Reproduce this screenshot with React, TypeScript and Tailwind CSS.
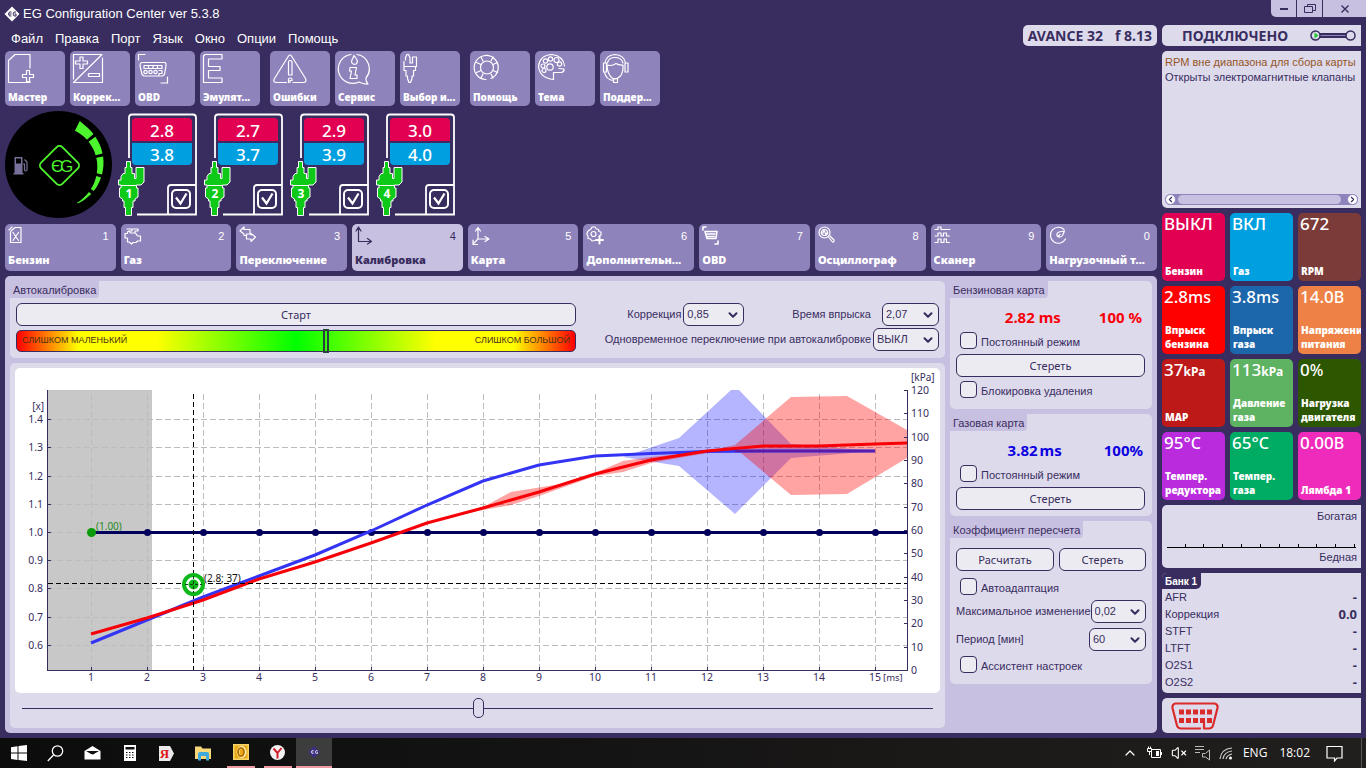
import React from "react";
import { ChevronDown, ChevronLeft, ChevronRight, ChevronUp, Search, VolumeX } from "lucide-react";

const UI = "font-['Liberation_Sans',Arial,sans-serif]";
const HEAVY = "font-['Noto_Sans',sans-serif] font-black";

/* ---------- icons ---------- */

function Ico({ children, small }: { children: React.ReactNode; small?: boolean }) {
  return (
    <svg
      className={small ? "h-5 w-5" : "h-[34px] w-[36px]"}
      viewBox={small ? "0 0 20 20" : "0 0 36 34"}
      fill="none"
      stroke="currentColor"
      strokeWidth={1.2}
      strokeLinejoin="round"
      strokeLinecap="round"
      aria-hidden="true"
    >
      {children}
    </svg>
  );
}

const toolIcons: Record<string, React.ReactNode> = {
  master: <path d="M23 15V1.5H8L1.5 7.5V29.5H23V28M19.5 17.5h3v4h4v3h-4v4h-3v-4h-4v-3h4z" />,
  correct: (
    <path d="M1.5 26V1.5H30L1.5 29.5H30.5V5M8 4h3v4h4.5v3H11v4.5H8V11H3.5V8H8zM17 20.5h10.5v3H17q-1.5-1.5 0-3z" />
  ),
  obd: (
    <g>
      <path d="M1.5 7V1.5H8M30.5 24v6H24" />
      <path d="M4.500 9.5H28q1.5 1 1 3l-1.5 9-2 1.500H7l-2-1.500L3 12.500q0-2.500 1.500-3z" />
      <path d="M7 12.500h18v3H7zM11.500 12.500v3M16 12.500v3M20.500 12.500v3" />
      <circle cx="8.500" cy="19" r="1.700" />
      <circle cx="13.500" cy="19" r="1.700" />
      <circle cx="18.500" cy="19" r="1.700" />
      <path d="M22 17.500h3v3h-3v2" />
    </g>
  ),
  emul: <path d="M3 1.5H20V6H6.5V13.5H18V17.5H6.5V25H20V29.5H1.5V3z" />,
  errors: (
    <path d="M14.5 29.5H4q-3.500-.5-1.500-4L16.500 3q1.500-2 3 0l14 22.500q1.500 3.500-1.500 4H21M16.500 8.500q1.500-2 3.500 0V22h-3.500zM16.500 29.500v-3.500q2-2 3.500 0v1.500h-2v2" />
  ),
  service: (
    <path d="M14 1.5A14.5 14.5 0 1 0 22 29q5 2.500 9 2-2.500-3-2-6A14.500 14.500 0 0 0 20 1.500M17 2.500l2.500 3.500q2 3-.5 5-2.500 1-4-1-1-2 .5-4zM13 14.500h6.500L18 22h2v3.500h-7l1.500-7.500h-2z" />
  ),
  injector: (
    <path d="M3.500 7V4.500L5 1.500h1.500L8 4.500V10h2.500V4h4v9.500H2V8.500M2 13.500v4h2V23h1.500v2.500L7 29.500h1.500l1.500-4V23h1.500v-5.500h2v-4" />
  ),
  help: (
    <g>
      <path d="M14 26.500A12 12 0 1 1 19 25.500" />
      <circle cx="15" cy="14.500" r="6.500" />
      <path d="M9 4l2 4M21 4l-2 4M4.500 9.500l4.500 2M25.500 9.500l-4.500 2M4.500 19.500l4.500-2M25.500 19.500l-4.500-2M9 25l2-4M21 25l-2-4" />
    </g>
  ),
  theme: (
    <g>
      <path d="M27.500 13q-1-10-12.500-11.500Q3 2 1.500 13 2.500 25 16.500 26.500V19.500h8q3-1 2.500-3.500l-5-.5" />
      <circle cx="13" cy="14" r="3.200" />
      <circle cx="6" cy="13" r="2" />
      <circle cx="7" cy="17.500" r="2" />
      <circle cx="8.500" cy="8" r="2.200" />
      <circle cx="13.500" cy="6" r="2.200" />
      <circle cx="19.500" cy="7" r="2.500" />
      <circle cx="22.500" cy="11" r="2.200" />
    </g>
  ),
  support: (
    <path d="M3 10Q4 2 13 1.500 22 2 23.500 10M5.500 10Q6.500 4.500 13 4.500T21 10M3 10H1.500v9H4.500v-9zM23.500 10H26v9h-3v-9M5 12q5 1.500 9-1.500 3 2 7 1.500 .5 7-2.500 11-5 5-9 1.500-4-4-4.500-12M2.500 19q1.500 8 9 8.500M11.500 25.500h4v4h-4z" />
  ),
};

const tabIcons: Record<string, React.ReactNode> = {
  petrol: <path d="M3.500 4.500L7 1.500h6v15H2.500V6zM1 4l3-3M5 6.500l5.500 8M10.500 6.500L5 14.500" />,
  gas: <path d="M3 3h5v2H6M9 3h5v2h-3v2M5 5l1.500 2h5l2 3h3v5h-3l-1.500 1.500H9L7.500 18 5 16H3.500V12H1V7.500h2.500V6z" />,
  swap: <path d="M1 5l4-4v2.500h6V8H7.500v1.500H5V8L1 5zM7.500 9.500V13H12v2.500L16.500 11 12 7.500V9" />,
  calib: <path d="M3.500 15.500H16M3.500 15.500V2M1 5l2.500-4L6 5M12.500 12.500l4 3-4 2.500" />,
  map: <path d="M7 13h11M7 13V2M4.500 5L7 1.500 9.500 5M14 10.500l4 2.500-4 2.500M7 13l-5 5M2 14v4.500h4.500" />,
  extra: (
    <g>
      <path d="M13 10l2-1V6l-2-.5-.5-2-2-.5L9 1H6L5 3 3.500 4 2 5 .8 8l1.200 2v2.500l2.500.5L6 15l3-.5" />
      <circle cx="7.500" cy="8" r="2.500" />
      <path d="M13.500 10.500v7M10 14h7" strokeWidth="2" />
    </g>
  ),
  obd: <path d="M1 4V1h3M16 15v3h-3M3 5.500h12l-1 7H5zM5 8h8M5.500 10.500h7" strokeWidth="1.600" />,
  scope: (
    <g>
      <circle cx="6.500" cy="6.500" r="5.500" />
      <path d="M3 7h2l1-3 2 5 1-2h1M10.500 11l4 5q2 .5 1.500-2l-4-4" />
      <circle cx="6.500" cy="6.500" r="3" />
    </g>
  ),
  scanner: <path d="M1 3.500h3V1h3v2.500h9M1 10h3V7h3v3h2.500V7h3v3h3M1 16.500h3V13h3v3.500h3V13h2.500v3.500h3" />,
  load: <path d="M16.500 13A8 8 0 1 1 15 3.500M8.500 10.500Q6.500 7.500 10 6l5.500-1-2 4.500q-2 2.500-5 1M11 8.500l-2 2" />,
};

function ToolButton({ icon, label, gap }: { icon: string; label: string; gap?: boolean }) {
  return (
    <button
      className={`flex h-[55px] w-[60px] flex-col justify-between rounded-[5px] bg-[#8f83bc] pt-0.5 pb-px pl-0.5 text-left text-white ${gap ? "ml-[5px]" : ""}`}
    >
      <Ico>{toolIcons[icon]}</Ico>
      <span className={`w-full pl-px text-[10px] leading-4 whitespace-nowrap ${HEAVY}`}>{label}</span>
    </button>
  );
}

function Tab({ icon, label, n, active }: { icon: string; label: string; n: string; active?: boolean }) {
  return (
    <button
      className={`flex h-[47px] min-w-0 flex-col justify-between rounded-[5px] px-[3px] pt-0.5 pb-0.5 text-left ${active ? "bg-[#c8c0e0] text-[#382d5e]" : "bg-[#8f83bc] text-white"}`}
    >
      <span className="flex w-full items-center justify-between pr-1">
        <Ico small>{tabIcons[icon]}</Ico>
        <span className={`text-[11px] ${UI}`}>{n}</span>
      </span>
      <span className={`w-full text-[11px] leading-[18px] whitespace-nowrap ${HEAVY}`}>{label}</span>
    </button>
  );
}

/* ---------- gauge and cylinders ---------- */

function ring(a0: number, a1: number) {
  const t = (a: number) => (a + 64) / 128;
  const outer = (a: number) => 48.5 - 5 * Math.sqrt(t(a));
  const inner = (a: number) => 37.5 + 5 * t(a) * t(a);
  const p = (a: number, r: number) => {
    const k = (a * Math.PI) / 180;
    return `${(53.5 + r * Math.cos(k)).toFixed(1)},${(53.5 + r * Math.sin(k)).toFixed(1)}`;
  };
  const steps = [0, 0.25, 0.5, 0.75, 1].map((s) => a0 + (a1 - a0) * s);
  return [...steps.map((a) => p(a, outer(a))), ...steps.reverse().map((a) => p(a, inner(a)))].join(" ");
}

function Gauge() {
  const arcs: [number, number][] = [[-64, -41], [-37, -14], [-10, 13], [17, 37], [42, 64]];
  return (
    <svg className="h-[107px] w-[107px] shrink-0" viewBox="0 0 107 107" role="img" aria-label="EG">
      <circle cx="53.5" cy="53.5" r="53.5" fill="#000" />
      {arcs.map(([a, b]) => (
        <polygon key={a} points={ring(a, b)} fill="#4df52e" />
      ))}
      <rect x="39.5" y="39.5" width="30" height="30" rx="4" transform="rotate(45 54.5 54.5)" fill="none" stroke="#4df52e" strokeWidth="1.8" />
      <text x="46" y="61" fontSize="17" fontFamily="Liberation Sans, sans-serif" fill="#4df52e">Є</text>
      <text x="55" y="61" fontSize="17" fontFamily="Liberation Sans, sans-serif" fill="#4df52e">G</text>
      <path d="M9.500 46h8v16h1v1.500h-10V62h1zM11 47.500v5h5v-5z" fill="#77709a" fillRule="evenodd" />
      <path d="M18 53h1.500v6q1 2 2.500 0v-8l-2.500-2.500" fill="none" stroke="#77709a" strokeWidth="1.200" />
    </svg>
  );
}

function Cylinder({ n, petrol, gas }: { n: number; petrol: string; gas: string }) {
  return (
    <div className="grid h-[103px] w-[81px] font-['Noto_Sans',sans-serif] font-medium text-white">
      <svg className="col-start-1 row-start-1 h-[103px] w-[81px]" viewBox="0 0 81 103" fill="none" stroke="#fff" strokeWidth="1.800">
        <path d="M11 45V4.500q0-3 3-3H75q3 0 3 3V101.500H19M50 101V75q0-3 3-3H78" />
        <path
          d="M8.500 48.500h4v6H14v6h2.500v5h1.500V54.500h8V69l-3 3h-4.500v3H20v9l-3 2v2h-2v6.500h-1.500v8h-6v-8H6V88H4.500v-2l-3-2v-9H3v-3H.5v-5h2.500v-3.500L5 60.500h2v-6h1.500z"
          fill="#0fc918"
          stroke="#fff"
          strokeWidth="1"
        />
        <path d="M3 72.500h16" strokeWidth="1" />
        <text x="11" y="85" textAnchor="middle" fontSize="12" fontWeight="700" fontFamily="Noto Sans, sans-serif" fill="#fff" stroke="none">{n}</text>
      </svg>
      <div className="col-start-1 row-start-1 flex flex-col pt-[5px] pl-3.5">
        <div className="h-[23px] w-[60px] rounded-t-[4px] bg-[#e20052] text-center text-[17px] leading-[26px]">{petrol}</div>
        <div className="mt-0.5 h-[22px] w-[60px] rounded-b-[4px] bg-[#009fe0] text-center text-[17px] leading-6">{gas}</div>
        <label className="mt-6 ml-[39px] grid h-5 w-5">
          <input type="checkbox" defaultChecked aria-label={`Цилиндр ${n}`} className="peer col-start-1 row-start-1 h-5 w-5 appearance-none rounded-[5px] border-2 border-white" />
          <svg className="pointer-events-none col-start-1 row-start-1 hidden h-5 w-5 peer-checked:block" viewBox="0 0 20 20" fill="none" stroke="#fff" strokeWidth="2.200">
            <path d="M5 8.500l4.500 6L15.500 4.500" />
          </svg>
        </label>
      </div>
    </div>
  );
}

/* ---------- form parts ---------- */

function PushButton({ children, className = "" }: { children: React.ReactNode; className?: string }) {
  return (
    <button className={`h-[23px] rounded-[6px] border border-[#382d5e] bg-[#ecebf1] font-['Noto_Sans',sans-serif] text-[11px] leading-5 ${className}`}>
      {children}
    </button>
  );
}

function Drop({ id, value, width }: { id: string; value: string; width: string }) {
  return (
    <span className={`grid items-center ${width}`}>
      <select id={id} defaultValue={value} className="col-start-1 row-start-1 h-[23px] w-full appearance-none rounded-[6px] border border-[#382d5e] bg-[#ecebf1] pl-[3px] text-[11px]">
        <option>{value}</option>
      </select>
      <ChevronDown className="pointer-events-none col-start-1 row-start-1 mr-1 h-3.5 w-3.5 justify-self-end" strokeWidth={3.5} />
    </span>
  );
}

function Check({ children }: { children: React.ReactNode }) {
  return (
    <label className="flex h-[17px] items-center gap-1 pl-1 text-[11px]">
      <input type="checkbox" className="h-[17px] w-[17px] shrink-0 appearance-none rounded-[4px] border border-[#382d5e] bg-[#ecebf1] checked:bg-[#382d5e]" />
      <span className="pt-1">{children}</span>
    </label>
  );
}

function Group({ title, children, className = "" }: { title: string; children: React.ReactNode; className?: string }) {
  return (
    <section className={`overflow-hidden rounded-[5px] bg-[#dddaec] ${className}`}>
      <div className="flex">
        <h2 className="h-[17px] rounded-br-[4px] bg-[#c8c0e0] px-[3px] text-[11px] leading-[18px] font-normal">{title}</h2>
      </div>
      {children}
    </section>
  );
}

/* ---------- chart ---------- */

const redLine = "76,266 132,250 188,232 244,211 300,194 356,175 412,155 468,140 524,124 580,106 636,92 692,83 748,78 804,78 860,76 892,75";
const blueLine = "76,275 132,252 188,229 244,208 300,187 356,163 412,137 468,113 524,97 580,88 636,85.5 692,83.5 748,83 860,83";

function Chart() {
  const xs = Array.from({ length: 15 }, (_, i) => i + 1);
  const left = Array.from({ length: 9 }, (_, i) => 0.6 + i / 10);
  const right = Array.from({ length: 13 }, (_, i) => i * 10);
  const ly = (v: number) => Math.round(164 - (v - 1) * 282) + 0.5;
  const ry = (v: number) => Math.round(302 - v * 2.333) + 0.5;
  return (
    <svg className="block w-full rounded-[5px] bg-white" viewBox="0 0 925 325" fontSize="10.5" fontFamily="Noto Sans, sans-serif" fill="#382d5e">
      <rect x="33" y="22" width="104" height="280" fill="#c8c8c8" />
      <g stroke="#bcbcbc" strokeDasharray="6 3" shapeRendering="crispEdges">
        {xs.map((x) => <line key={x} x1={20.5 + x * 56} x2={20.5 + x * 56} y1="26" y2="302" />)}
        {left.map((v) => <line key={v} x1="33" x2="892" y1={ly(v)} y2={ly(v)} />)}
      </g>
      <polyline points="76,164.500 892,164.500" stroke="#00005c" strokeWidth="3" />
      {xs.slice(1).map((x) => <circle key={x} cx={20.5 + x * 56} cy="164.500" r="3.500" fill="#00005c" />)}
      <polygon points="608,89 664,70 716,22 724,22 776,76 860,83 776,90 720,146 664,98 608,89" fill="#0000ff" fillOpacity=".29" />
      <polygon
        points="440,148 468,139 496,124 552,115 580,105 608,93 636,89 692,83 720,77 776,29 832,28 892,62 892,90 832,126 776,127 720,80 692,85 636,95 608,104 580,108 524,128 496,137 468,142"
        fill="#ff0000"
        fillOpacity=".36"
      />
      <polyline points={blueLine} fill="none" stroke="#3434f4" strokeWidth="3" />
      <polyline points={redLine} fill="none" stroke="#f80008" strokeWidth="3" />
      <polyline points="720,83 860,83" stroke="#5a1ca8" strokeWidth="2.5" />
      <g stroke="#000" strokeDasharray="5 3" shapeRendering="crispEdges">
        <line x1="178.500" x2="178.500" y1="26" y2="302" />
        <line x1="33" x2="892" y1="215.500" y2="215.500" />
      </g>
      <g stroke="#382d5e" shapeRendering="crispEdges">
        <path d="M32.500 22V302.500H892.500V22" fill="none" />
        {xs.map((x) => <line key={x} x1={20.5 + x * 56} x2={20.5 + x * 56} y1="299" y2="302" />)}
        {left.map((v) => <line key={v} x1="33" x2="36" y1={ly(v)} y2={ly(v)} />)}
        {right.map((v) => <line key={v} x1="889" x2="892" y1={ry(v)} y2={ry(v)} />)}
      </g>
      <circle cx="76.500" cy="164.500" r="4.500" fill="#0a9a0a" />
      <text x="81" y="162" fill="#1f8a1f" fontSize="10">(1.00)</text>
      <circle cx="178.500" cy="216.500" r="9.500" fill="#fff" stroke="#0fb81a" strokeWidth="4" />
      <circle cx="178.500" cy="216.500" r="5" fill="#0fb81a" />
      <path d="M178.500 208v17M170 216.500h17" stroke="#173a17" strokeDasharray="3 2" />
      <text x="189" y="214" fill="#111" fontSize="10">(2.8; 37)</text>
      {xs.map((x) => <text key={x} x={20 + x * 56} y="313" textAnchor="middle">{x}</text>)}
      <text x="868" y="313" fontSize="9.5">[ms]</text>
      {left.map((v) => <text key={v} x="28" y={ly(v) + 3} textAnchor="end">{v.toFixed(1)}</text>)}
      <text x="29" y="42" textAnchor="end" fontSize="10">[x]</text>
      {right.map((v) => <text key={v} x="896" y={ry(v) + 3}>{v}</text>)}
      <text x="896" y="13" fontSize="10">[kPa]</text>
    </svg>
  );
}

/* ---------- side tiles ---------- */

const tiles: [string, string, string[], string][] = [
  ["ВЫКЛ", "", ["Бензин"], "bg-[#e20052]"],
  ["ВКЛ", "", ["Газ"], "bg-[#00a0e0]"],
  ["672", "", ["RPM"], "bg-[#7b3b39]"],
  ["2.8", "ms", ["Впрыск", "бензина"], "bg-[#ff0000]"],
  ["3.8", "ms", ["Впрыск", "газа"], "bg-[#1c66ab]"],
  ["14.0", "В", ["Напряжени", "питания"], "bg-[#ee8246]"],
  ["37", "kPa", ["MAP"], "bg-[#bd1919]"],
  ["113", "kPa", ["Давление", "газа"], "bg-[#5db361]"],
  ["0", "%", ["Нагрузка", "двигателя"], "bg-[#2c5700]"],
  ["95°", "C", ["Темпер.", "редуктора"], "bg-[#b92bdc]"],
  ["65°", "C", ["Темпер.", "газа"], "bg-[#00ab63]"],
  ["0.00", "В", ["Лямбда 1"], "bg-[#ef2bbb]"],
];

function Tiles() {
  return (
    <div className="grid grid-cols-3 gap-[5px] font-['Noto_Sans',sans-serif] text-white">
      {tiles.map(([value, unit, lines, color]) => (
        <div key={lines.join(" ")} className={`flex h-[68px] flex-col justify-between overflow-hidden rounded-[5px] pb-[3px] pl-[2px] ${color}`}>
          <div className="text-[17px] leading-[22px] font-medium whitespace-nowrap">
            {value}
            <span className={unit === "kPa" ? "text-[12px] font-bold" : "text-[16px]"}>{unit}</span>
          </div>
          <div className="pl-px text-[10px] leading-[14px] font-black whitespace-nowrap">
            {lines.map((l) => <div key={l}>{l}</div>)}
          </div>
        </div>
      ))}
    </div>
  );
}

/* ---------- taskbar ---------- */

function Taskbar() {
  const item = "flex h-[30px] w-[37px] items-center justify-center";
  return (
    <footer className="flex h-[30px] items-center bg-gradient-to-r from-[#0c0c0c] to-[#211f1e] font-['Open_Sans',sans-serif] text-white">
      <button className={item} aria-label="Пуск">
        <svg className="h-4 w-4" viewBox="0 0 16 16" fill="#fff"><path d="M0 2.200l6.500-1v6.300H0zM7.500 1L16 0v7.500H7.500zM0 8.500h6.500V15L0 14zM7.500 8.500H16V16l-8.500-1z" /></svg>
      </button>
      <button className={item} aria-label="Поиск">
        <svg className="h-[17px] w-[17px]" viewBox="0 0 17 17" fill="none" stroke="#fff" strokeWidth="1.300"><circle cx="10.500" cy="6" r="5.200" /><path d="M6.500 10L.8 16" /></svg>
      </button>
      <button className={item} aria-label="Почта">
        <svg className="h-4 w-[17px]" viewBox="0 0 17 16"><path d="M.5 6L8.500 1l8 5v8.500H.5z" fill="#fff" /><path d="M2 6h13L9 9.500 7 9z" fill="#111" /></svg>
      </button>
      <button className={item} aria-label="Калькулятор">
        <svg className="h-4 w-3" viewBox="0 0 12 16"><path d="M0 0h12v16H0z" fill="#fff" /><path d="M1.500 2h9v2.500h-9z" fill="#111" /><path d="M2 7.500h8M2 10h8M2 12.500h8" stroke="#111" strokeWidth="1.200" strokeDasharray="1.500 1.500" /></svg>
      </button>
      <button className={item} aria-label="Яндекс">
        <svg className="h-[15px] w-[15px]" viewBox="0 0 15 15"><path d="M0 0h11l4 7.500L11 15H0z" fill="#eceaea" /><text x="5.500" y="12" textAnchor="middle" fontSize="13" fontWeight="700" fontFamily="Liberation Serif, serif" fill="#e01515">Я</text></svg>
      </button>
      <button className={item} aria-label="Проводник">
        <svg className="h-[15px] w-[17px]" viewBox="0 0 17 15"><path d="M0 .5h6l1.500 2H16V13H0z" fill="#f6d878" /><path d="M3 14.500V8q0-2 2-2h7q2 0 2 2v6.500h-3V10H6v4.500z" fill="#3fa9dc" /></svg>
      </button>
      <button className={item} aria-label="Органайзер">
        <span className="flex h-full w-7 items-center justify-center border-b-2 border-[#f09aa4]">
          <svg className="h-4 w-4" viewBox="0 0 16 16"><rect width="16" height="16" fill="#f6d46a" /><rect x="1.500" y="1.500" width="13" height="13" fill="#eaa914" /><ellipse cx="8.500" cy="8" rx="3.500" ry="4.500" fill="none" stroke="#fff4c0" strokeWidth="3" /><ellipse cx="8" cy="8" rx="3" ry="4" fill="none" stroke="#b87405" strokeWidth="2" /></svg>
        </span>
      </button>
      <button className={item} aria-label="Браузер">
        <span className="flex h-full w-7 items-center justify-center border-b-2 border-[#f09aa4]">
          <svg className="h-[15px] w-[15px]" viewBox="0 0 15 15"><circle cx="7.500" cy="7.500" r="7.500" fill="#f2f2f2" /><path d="M3.500 3.500L7.500 8v5.500M11.500 3L7.500 8" fill="none" stroke="#d31d2a" strokeWidth="2" /></svg>
        </span>
      </button>
      <button className="flex h-[30px] w-9 items-center justify-center border-b-2 border-[#f09aa4] bg-[#3d3d3d]" aria-label="EG Configuration Center">
        <svg className="h-4 w-4" viewBox="0 0 16 16"><path d="M8 2l6 6-6 6-6-6z" fill="#3c2f86" /><path d="M7.500 6.500H6q-1.500 1.500 0 3h1.500M5.500 8h2M11.500 6.500h-1.500q-1.500 1.500 0 3h1.500V8H10.500" fill="none" stroke="#ddd" strokeWidth=".8" /></svg>
      </button>
      <div className="ml-auto flex h-full items-center gap-2 pr-[4px] text-[12px]">
        <ChevronUp className="h-4 w-4" strokeWidth={1.8} />
        <svg className="h-4 w-[17px]" viewBox="0 0 17 16" fill="none" stroke="#fff"><path d="M5.500 4.500H14.500V12.500H5.500zM15.500 7v3" /><path d="M10 6h3v5h-3z" fill="#fff" stroke="none" /><path d="M1.500 3.500h4v3h-4zM2.500 1.500v2M4.500 1.500v2M3.500 6.500V10" fill="#211f1e" /></svg>
        <VolumeX className="h-4 w-4" strokeWidth={1.6} />
        <svg className="h-4 w-4" viewBox="0 0 16 16" fill="none" stroke="#bbb"><path d="M0 1.500h9M0 4.500h9M0 7.500h5M7.500 8.500h3L14.500 5v10l-4-3h-3z" /></svg>
        <svg className="h-3.5 w-3.5" viewBox="0 0 14 14" fill="none" stroke="#ccc" strokeWidth="1.200"><path d="M1 13Q2 3 13 2M4 13Q5 6 13 5M7 13q1-4 6-5" /><circle cx="11.500" cy="12" r="1.500" fill="#fff" stroke="none" /></svg>
        <span className="pl-0.5">ENG</span>
        <span className="pl-1">18:02</span>
        <button className="pl-2" aria-label="Уведомления">
          <svg className="h-[17px] w-[17px]" viewBox="0 0 17 17" fill="none" stroke="#fff" strokeWidth="1.200"><path d="M1 1.500h15v11.500h-5L8.500 16V13H1z" /></svg>
        </button>
        <span className="ml-2.5 h-full w-px bg-[#555]" />
      </div>
    </footer>
  );
}

/* ---------- page ---------- */

export default function App() {
  const bank = [["AFR", "-"], ["Коррекция", "0.0"], ["STFT", "-"], ["LTFT", "-"], ["O2S1", "-"], ["O2S2", "-"]];
  return (
    <div className={`flex min-h-screen flex-col bg-[#382d5e] text-[#382d5e] ${UI}`}>
      <header className="flex h-[25px] items-start justify-between">
        <div className="flex items-center gap-[3px] pt-1 pl-1 text-[13px] leading-5 text-white">
          <svg className="h-4 w-4" viewBox="0 0 16 16"><path d="M8 .5L15.500 8 8 15.500.5 8z" fill="#fff" /><path d="M7.500 6H5.500q-2 2 0 4h2M4.500 8h3M12 6h-2q-2 2 0 4h2V8h-1.500" fill="none" stroke="#382d5e" /></svg>
          <h1 className="font-normal">EG Configuration Center ver 5.3.8</h1>
        </div>
        <div className="flex h-[17px] gap-px overflow-hidden rounded-bl-[5px]">
          <button className="flex w-[25px] items-center justify-center bg-[#c8c0e0]" aria-label="Свернуть"><span className="h-0.5 w-2 bg-[#382d5e]" /></button>
          <button className="flex w-[25px] items-center justify-center bg-[#c8c0e0]" aria-label="Развернуть">
            <svg className="h-3 w-3.5" viewBox="0 0 14 12" fill="none" stroke="#382d5e"><path d="M1.500 3.500h8v6h-8zM4.500 3V1.500h8v6H10" /></svg>
          </button>
          <button className="flex w-[43px] items-center justify-center bg-[#c8c0e0]" aria-label="Закрыть">
            <svg className="h-2 w-2" viewBox="0 0 8 8" stroke="#382d5e" strokeWidth="1.400"><path d="M.5 .5l7 7M7.500 .5l-7 7" /></svg>
          </button>
        </div>
      </header>

      <div className="flex flex-1 gap-[5px] px-[5px] pb-[5px]">
        <div className="flex min-w-0 flex-1 flex-col gap-[5px]">
          <div className="flex h-[21px] items-center justify-between">
            <nav className="flex gap-3 pt-1.5 pl-1.5 text-[13px] text-white">
              {["Файл", "Правка", "Порт", "Язык", "Окно", "Опции", "Помощь"].map((m) => <button key={m}>{m}</button>)}
            </nav>
            <div className="flex h-[21px] items-center gap-3 rounded-[5px] bg-[#dddaec] px-[5px] font-['Noto_Sans',sans-serif] text-[14px] font-bold">
              <span>AVANCE 32</span><span>f 8.13</span>
            </div>
          </div>

          <div className="flex gap-[5px]">
            <ToolButton icon="master" label="Мастер" />
            <ToolButton icon="correct" label="Коррек..." />
            <ToolButton icon="obd" label="OBD" />
            <ToolButton icon="emul" label="Эмулят..." />
            <ToolButton icon="errors" label="Ошибки" gap />
            <ToolButton icon="service" label="Сервис" />
            <ToolButton icon="injector" label="Выбор и..." />
            <ToolButton icon="help" label="Помощь" gap />
            <ToolButton icon="theme" label="Тема" />
            <ToolButton icon="support" label="Поддер..." />
          </div>

          <div className="flex h-[108px] items-start gap-[5px]">
            <Gauge />
            <div className="flex gap-[5px] pt-[2px] pl-px">
              <Cylinder n={1} petrol="2.8" gas="3.8" />
              <Cylinder n={2} petrol="2.7" gas="3.7" />
              <Cylinder n={3} petrol="2.9" gas="3.9" />
              <Cylinder n={4} petrol="3.0" gas="4.0" />
            </div>
          </div>

          <div className="grid grid-cols-10 gap-[5px]">
            <Tab icon="petrol" label="Бензин" n="1" />
            <Tab icon="gas" label="Газ" n="2" />
            <Tab icon="swap" label="Переключение" n="3" />
            <Tab icon="calib" label="Калибровка" n="4" active />
            <Tab icon="map" label="Карта" n="5" />
            <Tab icon="extra" label="Дополнительн..." n="6" />
            <Tab icon="obd" label="OBD" n="7" />
            <Tab icon="scope" label="Осциллограф" n="8" />
            <Tab icon="scanner" label="Сканер" n="9" />
            <Tab icon="load" label="Нагрузочный т..." n="0" />
          </div>

          <main className="flex flex-1 gap-[5px] rounded-[5px] bg-[#c8c0e0] p-[5px]">
            <div className="flex min-w-0 flex-1 flex-col gap-[5px]">
              <Group title="Автокалибровка" className="h-[77px]">
                <div className="flex px-1.5 pt-[5px]">
                  <div className="flex w-[560px] flex-col gap-[3px]">
                    <PushButton>Старт</PushButton>
                    <div className="grid items-center">
                      <div className="col-start-1 row-start-1 flex h-[22px] items-center justify-between rounded-[5px] border border-[#382d5e] bg-[linear-gradient(90deg,#ff0000_0%,#ffff00_11%,#ffff00_25%,#00ff00_50%,#ffff00_75%,#ffff00_89%,#ff0000_100%)] px-[5px] text-[9px] text-[#4d3416]">
                        <span>СЛИШКОМ МАЛЕНЬКИЙ</span>
                        <span>СЛИШКОМ БОЛЬШОЙ</span>
                      </div>
                      <span className="col-start-1 row-start-1 ml-[307px] h-6 w-1.5 border-2 border-[#2a3f3f]" />
                    </div>
                  </div>
                  <div className="flex flex-1 flex-col items-end gap-0.5 text-[11px]">
                    <div className="flex items-center">
                      <label htmlFor="corr" className="pr-0.5">Коррекция</label>
                      <Drop id="corr" value="0,85" width="w-[61px]" />
                      <label htmlFor="inj" className="pr-[11px] pl-12">Время впрыска</label>
                      <Drop id="inj" value="2,07" width="w-[57px]" />
                    </div>
                    <div className="flex items-center">
                      <label htmlFor="sim" className="pr-0.5">Одновременное переключение при автокалибровке</label>
                      <Drop id="sim" value="ВЫКЛ" width="w-[66px]" />
                    </div>
                  </div>
                </div>
              </Group>
              <section className="flex flex-1 flex-col rounded-[5px] bg-[#dddaec] p-[5px] pb-0">
                <Chart />
                <div className="grid h-[30px] items-center px-[7px]">
                  <input
                    type="range"
                    max={1000}
                    defaultValue={501}
                    aria-label="Масштаб"
                    className="h-5 w-full appearance-none bg-[linear-gradient(#382d5e,#382d5e)] bg-[length:100%_1px] bg-center bg-no-repeat [&::-webkit-slider-thumb]:h-5 [&::-webkit-slider-thumb]:w-[11px] [&::-webkit-slider-thumb]:appearance-none [&::-webkit-slider-thumb]:rounded-[5px] [&::-webkit-slider-thumb]:border [&::-webkit-slider-thumb]:border-[#382d5e] [&::-webkit-slider-thumb]:bg-[#dddaec]"
                  />
                </div>
              </section>
            </div>

            <div className="flex w-[202px] flex-col gap-[5px]">
              <Group title="Бензиновая карта">
                <div className="flex flex-col px-1.5 pb-[11px]">
                  <div className="flex h-[34px] items-center justify-end gap-[38px] pt-1 pr-1 font-['Noto_Sans',sans-serif] text-[15px] font-bold text-[#f80008]">
                    <span>2.82 ms</span><span>100 %</span>
                  </div>
                  <Check>Постоянный режим</Check>
                  <PushButton className="mt-[5px] mb-1 w-[189px] self-start">Стереть</PushButton>
                  <Check>Блокировка удаления</Check>
                </div>
              </Group>
              <Group title="Газовая карта">
                <div className="flex flex-col px-1.5 pb-1.5">
                  <div className="flex h-[34px] items-center justify-end gap-[42px] pt-1 pr-[3px] font-['Noto_Sans',sans-serif] text-[15px] font-bold text-[#0c00e0]">
                    <span className="flex gap-0.5"><span>3.82</span><span>ms</span></span><span>100%</span>
                  </div>
                  <Check>Постоянный режим</Check>
                  <PushButton className="mt-[5px] w-[189px] self-start">Стереть</PushButton>
                </div>
              </Group>
              <Group title="Коэффициент пересчета">
                <div className="flex flex-col gap-[5px] px-1.5 pt-2.5 pb-[11px]">
                  <div className="flex gap-[5px]">
                    <PushButton className="w-[98px]">Расчитать</PushButton>
                    <PushButton className="w-[87px]">Стереть</PushButton>
                  </div>
                  <div className="pt-0.5"><Check>Автоадаптация</Check></div>
                  <div className="flex h-[23px] w-[190px] items-center justify-between text-[11px]">
                    <label htmlFor="maxc" className="whitespace-nowrap">Максимальное изменение</label>
                    <Drop id="maxc" value="0,02" width="w-[57px]" />
                  </div>
                  <div className="flex h-[23px] w-[190px] items-center justify-between text-[11px]">
                    <label htmlFor="per">Период [мин]</label>
                    <Drop id="per" value="60" width="w-[57px]" />
                  </div>
                  <Check>Ассистент настроек</Check>
                </div>
              </Group>
            </div>
          </main>
        </div>

        <aside className="flex w-[199px] flex-col gap-[5px]">
          <div className="flex h-[21px] items-center justify-between rounded-l-[5px] bg-[#dddaec] pr-[5px] pl-5 font-['Noto_Sans',sans-serif] text-[14px] font-bold">
            <span>ПОДКЛЮЧЕНО</span>
            <svg className="h-3 w-[46px]" viewBox="0 0 46 12" stroke="#382d5e" fill="none"><path d="M10 5.500H36" strokeWidth="5" /><path d="M10 5.500H36" strokeWidth="1" stroke="#8f83bc" /><circle cx="5.500" cy="5.500" r="4.500" fill="#dddaec" strokeWidth="1.500" /><circle cx="40.500" cy="5.500" r="4.500" fill="#dddaec" strokeWidth="1.500" /><path d="M4.500 2.500l4 3-4 3z" fill="#1fc82a" stroke="none" /></svg>
          </div>
          <div className="flex h-[157px] flex-col rounded-l-[5px] bg-[#dddaec] px-[3px] pt-[4px] pb-[3px] text-[11px] leading-[15px] whitespace-nowrap">
            <p className="text-[#96551f]">RPM вне диапазона для сбора карты</p>
            <p>Открыты электромагнитные клапаны</p>
            <div className="mt-auto flex h-[11px] items-center justify-between rounded-full bg-[#8f83bc]">
              <button className="rounded-full border border-[#8f83bc] bg-white" aria-label="Влево"><ChevronLeft className="h-[9px] w-[9px]" strokeWidth={3} /></button>
              <span className="mx-[2px] h-[9px] flex-1 rounded-full bg-[#c8c0e0]" />
              <button className="ml-1 rounded-full border border-[#8f83bc] bg-white" aria-label="Вправо"><ChevronRight className="h-[9px] w-[9px]" strokeWidth={3} /></button>
            </div>
          </div>
          <Tiles />
          <div className="flex h-[63px] flex-col justify-between rounded-l-[5px] bg-[#dddaec] px-1 py-0.5 text-right text-[11px] leading-[18px]">
            <span>Богатая</span>
            <div>
              <svg className="block h-1 w-[190px]" viewBox="0 0 190 4" shapeRendering="crispEdges" stroke="#000">
                <path d="M1 3.500H190M19.500 0v4M37.500 0v4M56.500 0v4M75.500 0v4M94.500 0v4M113.500 0v4M132.500 0v4M150.500 0v4M169.500 0v4M188.500 0v4" />
              </svg>
              <span className="block">Бедная</span>
            </div>
          </div>
          <div className="h-[120px] overflow-hidden rounded-l-[5px] bg-[#dddaec]">
            <div className="flex"><h2 className="h-4 rounded-br-[5px] bg-[#382d5e] pr-1 pl-[3px] text-[10px] leading-[17px] font-bold text-white">Банк 1</h2></div>
            <table className="w-full text-[11px] leading-[17px]">
              <tbody>
                {bank.map(([k, v]) => (
                  <tr key={k} className="h-[17px]">
                    <th scope="row" className="p-0 pl-[3px] text-left font-normal">{k}</th>
                    <td className="p-0 pr-1 text-right font-['Noto_Sans',sans-serif] text-[13px] font-bold">{v}</td>
                  </tr>
                ))}
              </tbody>
            </table>
          </div>
          <div className="flex flex-1 items-center rounded-l-[5px] bg-[#dddaec] pl-[9px]">
            <svg className="h-7 w-12" viewBox="0 0 48 28" fill="none" stroke="#da2b2b" strokeWidth="2.200" strokeLinejoin="round">
              <path d="M30 26.500H10q-3 0-4-3L1.500 6q-.5-4 3-4.500H43.500q3.500.5 3 4.500L42 23.500q-1 3-4 3H33V19" />
              <path d="M8 10h33M8 18.500h33" strokeWidth="5" strokeDasharray="5 2" />
            </svg>
          </div>
        </aside>
      </div>
      <Taskbar />
    </div>
  );
}
